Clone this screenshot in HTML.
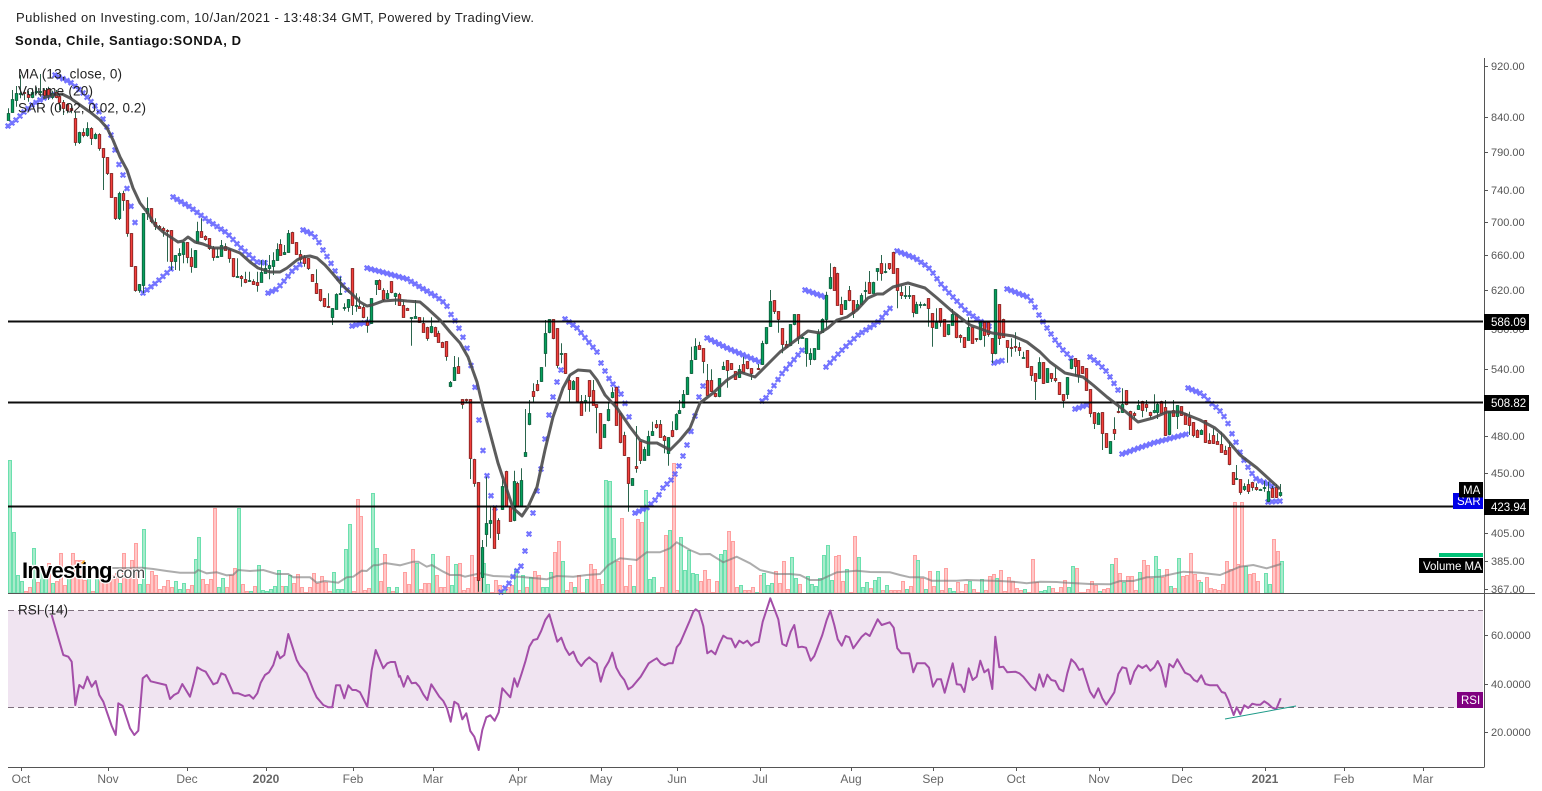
<!DOCTYPE html>
<html lang="en"><head><meta charset="utf-8"><title>Sonda, Chile, Santiago:SONDA, D</title>
<style>
html,body{margin:0;padding:0;background:#fff;width:1542px;height:791px;overflow:hidden}
svg{position:absolute;left:0;top:0;display:block}
text{font-family:"Liberation Sans",sans-serif}
.ax{font-size:11px;fill:#555}
.mo{font-size:12px;fill:#666;text-anchor:middle}
.lg{font-size:13.5px;fill:#222}
.bl{font-size:11.5px;fill:#fff}
</style></head><body>
<svg width="1542" height="791" viewBox="0 0 1542 791" xmlns="http://www.w3.org/2000/svg">
<rect x="8" y="610.5" width="1475" height="97" fill="#f0e4f1"/>
<path d="M8 610.5H1483M8 707.5H1483" stroke="#7d6f7d" stroke-width="1" stroke-dasharray="6 4" fill="none"/>
<g id="vol"></g>
<polyline id="vma" fill="none" stroke="#777" stroke-opacity=".6" stroke-width="2"/>
<g id="sar"></g>
<g id="can"></g>
<path d="M8 321.5H1483M8 402.5H1483M8 506.5H1483" stroke="#000" stroke-width="2" stroke-opacity=".95" fill="none"/>
<polyline id="ma" fill="none" stroke="#4a4a4a" stroke-opacity=".9" stroke-width="3" stroke-linejoin="round"/>
<polyline id="rsi" fill="none" stroke="#a34ea8" stroke-width="2" stroke-linejoin="round"/>
<line x1="1225" y1="719" x2="1296" y2="706" stroke="#1d9a88" stroke-width="1"/>
<path d="M8 593.5H1535M8 767.5H1484.5M1484.5 58V767M1484 66.5h4M1484 117.5h4M1484 152.5h4M1484 190.5h4M1484 222.5h4M1484 255.5h4M1484 290.5h4M1484 369.5h4M1484 436.5h4M1484 473.5h4M1484 533.5h4M1484 561.5h4M1484 589.5h4M1484 635.5h4M1484 684.5h4M1484 732.5h4M21.5 767v4M108.5 767v4M187.5 767v4M266.5 767v4M353.5 767v4M433.5 767v4M518.5 767v4M601.5 767v4M677.5 767v4M760.5 767v4M851.5 767v4M933.5 767v4M1016.5 767v4M1099.5 767v4M1182.5 767v4M1265.5 767v4M1344.5 767v4M1423.5 767v4" stroke="#555" stroke-width="1" fill="none"/>

<text x="16" y="22" font-size="13" fill="#222" textLength="518">Published on Investing.com, 10/Jan/2021 - 13:48:34 GMT, Powered by TradingView.</text>
<text x="15" y="45" font-size="13" font-weight="700" fill="#111" textLength="226">Sonda, Chile, Santiago:SONDA, D</text>
<text class="lg" x="18" y="78.5" textLength="104">MA (13, close, 0)</text>
<text class="lg" x="18" y="95.5" textLength="75">Volume (20)</text>
<text class="lg" x="18" y="112.5" textLength="128">SAR (0.02, 0.02, 0.2)</text>
<text class="lg" x="18" y="614.5" textLength="50">RSI (14)</text>

<text x="22" y="578" font-size="22" font-weight="700" fill="#000" letter-spacing="-.75" stroke="#fff" stroke-width="2.5" paint-order="stroke">Investing</text>
<text x="112" y="578" font-size="15.5" fill="#444" letter-spacing="-.2" stroke="#fff" stroke-width="2" paint-order="stroke">.com</text>
<path d="M81 563l3-3 1 1-2 3z" fill="#f5a623"/>

<text class="ax" x="1491" y="70">920.00</text>
<text class="ax" x="1491" y="121">840.00</text>
<text class="ax" x="1491" y="156">790.00</text>
<text class="ax" x="1491" y="194">740.00</text>
<text class="ax" x="1491" y="226">700.00</text>
<text class="ax" x="1491" y="259">660.00</text>
<text class="ax" x="1491" y="294">620.00</text>
<text class="ax" x="1491" y="333">580.00</text>
<text class="ax" x="1491" y="373">540.00</text>
<text class="ax" x="1491" y="440">480.00</text>
<text class="ax" x="1491" y="477">450.00</text>
<text class="ax" x="1491" y="537">405.00</text>
<text class="ax" x="1491" y="565">385.00</text>
<text class="ax" x="1491" y="593">367.00</text>
<text class="ax" x="1491" y="639">60.0000</text>
<text class="ax" x="1491" y="688">40.0000</text>
<text class="ax" x="1491" y="736">20.0000</text>

<rect x="1484" y="314" width="45" height="16" fill="#000"/><text class="bl" x="1491" y="326">586.09</text>
<rect x="1484" y="395" width="45" height="16" fill="#000"/><text class="bl" x="1491" y="407">508.82</text>
<rect x="1484" y="499" width="45" height="16" fill="#000"/><text class="bl" x="1491" y="511">423.94</text>
<rect x="1453" y="493" width="30" height="16" fill="#0000e6"/><text class="bl" x="1457" y="505">SAR</text>
<rect x="1459" y="482" width="24" height="15.500" fill="#000"/><text class="bl" x="1463" y="494">MA</text>
<rect x="1439" y="553" width="44" height="4" fill="#00c176"/>
<rect x="1419" y="558" width="64" height="15" fill="#000"/><text class="bl" x="1423" y="570">Volume MA</text>
<rect x="1457" y="692" width="26" height="16" fill="#800080"/><text class="bl" x="1461" y="704">RSI</text>

<text class="mo" x="21" y="783">Oct</text>
<text class="mo" x="108" y="783">Nov</text>
<text class="mo" x="187" y="783">Dec</text>
<text class="mo" x="266" y="783" font-weight="700">2020</text>
<text class="mo" x="353" y="783">Feb</text>
<text class="mo" x="433" y="783">Mar</text>
<text class="mo" x="518" y="783">Apr</text>
<text class="mo" x="601" y="783">May</text>
<text class="mo" x="677" y="783">Jun</text>
<text class="mo" x="760" y="783">Jul</text>
<text class="mo" x="851" y="783">Aug</text>
<text class="mo" x="933" y="783">Sep</text>
<text class="mo" x="1016" y="783">Oct</text>
<text class="mo" x="1099" y="783">Nov</text>
<text class="mo" x="1182" y="783">Dec</text>
<text class="mo" x="1265" y="783" font-weight="700">2021</text>
<text class="mo" x="1344" y="783">Feb</text>
<text class="mo" x="1423" y="783">Mar</text>
</svg>
<script>
var E=function(i){return document.getElementById(i)};
function pairs(ox,oy,s){return s.trim().split(/\s+/).map(function(p){var a=p.split(',');return [ox+a[0]/3,oy+a[1]/3]})}
/* candles: colour+zx,top,bot,wickTop,wickBot (3x crop coordinates) */
var CS=[[0,0,"g24,338,360,325,360 g37,298,338,270,338 g49,278,298,258,320 g61,278,282,225,295 r73,277,280,270,300 r85,282,292,272,305 g97,275,290,265,295 g109,272,276,262,282 g121,272,276,222,290 r133,270,285,265,295 r145,267,285,260,300 g157,278,290,272,298 r167,276,290,270,295 r178,288,307,282,330 r190,307,325,300,345 r202,313,330,310,340 r214,325,332,318,340 r226,355,428,335,437 g238,397,428,395,432 r250,397,407,385,412 g262,385,407,367,410 r274,385,415,382,435 g286,403,415,398,418 r298,403,446,400,452 r310,445,473,445,570 r322,472,521,472,525 r334,520,592,520,592 r346,592,656,592,660 g356,580,656,575,660 r368,580,602,572,632 r380,600,700,600,710 r392,700,800,700,800 r404,798,870,798,875 g416,852,870,852,878 g428,640,855,640,880 g440,625,640,592,660 r452,625,665,625,670 r464,665,678,655,690 r476,678,685,675,690 r488,684,690,680,710 r500,690,692,688,785 r512,690,782,690,810 g524,765,782,765,810 g536,760,765,745,812 g548,725,760,725,790 r560,726,772,726,790 r572,772,800,745,818 g584,750,800,750,800 g592,693,728,665,730 r604,693,710,655,712 r616,708,716,706,722 r628,715,745,715,750 r640,745,772,738,782 g652,768,772,745,772 g664,735,768,720,770 r676,737,748,730,750 r688,748,775,745,788 r700,775,830,775,832 g712,828,830,775,832 r724,828,835,825,860 r736,836,845,815,850 g748,840,843,815,845 r760,842,852,838,855 r772,845,855,815,875"],
[260,220,"g3,155,185,120,185 g16,143,158,120,160 g28,135,143,105,178 g40,120,137,97,165 g52,88,122,70,122 r61,72,104,58,104 g73,97,104,75,105 g85,40,98,30,98 r97,35,67,35,67 r109,67,104,67,104 r121,103,117,90,130 r133,112,130,105,140 r145,115,144,115,150 r157,162,182,162,184 r169,190,220,148,222 r181,208,242,208,245 r193,235,260,235,262 r205,258,262,220,263 g217,265,293,265,315 g229,222,266,220,268 g241,220,223,170,225 g253,262,265,250,272 g265,237,262,237,275 r277,145,257,145,285 g289,255,258,220,275 r298,257,262,230,265 r310,262,293,255,295 r322,302,314,290,338 g334,235,310,235,312 g347,181,193,181,225 r358,181,209,178,210 r370,209,237,205,245 g382,220,235,210,238 r394,184,218,184,220 g406,220,230,218,255 r418,222,256,218,257"],
[400,300,"r10,15,52,0,52 r22,23,28,23,30 g34,52,54,52,137 g46,48,53,0,55 r58,52,67,52,68 r70,68,95,52,97 r82,80,113,80,122 g94,78,95,52,100 r106,80,107,80,108 r115,99,125,92,127 r127,125,140,125,142 r139,124,170,124,182 g151,247,258,243,262 g163,202,241,168,243 r175,198,218,172,220 r187,298,314,298,326 r199,296,298,296,310 r211,298,475,298,537 r223,476,547,476,560 r235,547,842,547,875 g247,740,830,720,875 g259,670,702,530,740 g271,660,670,620,715 r283,620,742,620,744 r295,660,700,655,720 g307,558,628,540,630 r319,512,616,512,620 r331,617,662,617,664 g343,544,662,512,664 r352,550,618,545,620 g364,541,618,505,620 g376,457,470,327,470 g388,340,374,300,376 r400,272,288,250,305 r412,253,272,240,274 g424,202,245,202,246 g436,100,160,60,200 g448,58,97,58,100 r460,58,115,58,118 r472,85,196,85,205 g484,160,164,130,190 r496,160,220,160,222 r508,240,268,225,305 g520,243,268,240,270 r532,232,305,232,307 r544,302,344,285,346 g556,300,305,285,335 r568,241,290,241,335 r580,270,314,240,316 r589,313,322,313,400 r601,340,445,340,447 g613,372,410,372,412 g625,328,362,305,364 g637,275,290,262,295 r649,260,374,260,376 r661,340,428,340,430 r673,406,466,395,468 r685,472,550,472,635 g697,534,554,534,556 r709,499,505,378,518 r721,423,479,423,492 g733,447,479,440,481 g745,408,464,392,466 g757,394,406,365,408 r769,373,383,360,386 r781,372,410,360,412 r793,409,422,405,460 g805,412,460,412,497 r817,391,410,364,412 g829,343,389,340,391 g838,331,340,300,342 g850,283,323,270,325 g862,232,284,230,285 g874,181,220,140,222 g886,138,178,115,180 r898,135,146,125,148 r910,145,185,145,220"],
[660,250,"r142,390,436,342,438 r154,390,424,358,426 r166,430,440,428,442 g178,385,440,385,442 g190,348,358,335,360 r202,331,360,331,413 r214,340,358,340,360 r226,364,388,364,390 g238,358,382,345,384 r250,343,367,320,370 r262,334,356,334,358 r274,355,371,355,390 r295,355,358,342,360 g307,280,343,272,345 g319,232,281,232,283 g331,154,229,120,231 r343,151,184,151,192 r355,184,209,184,248 r367,235,284,235,310 r379,282,290,272,292 g391,223,287,223,289 g403,193,224,193,226 r415,193,265,193,282 g427,261,263,258,265 g439,265,311,265,350 g451,310,329,295,345 g463,295,329,295,331 g475,248,296,238,298 g487,208,247,205,249 g499,136,208,125,235 g511,82,116,40,118 r523,50,119,50,120 r532,68,164,68,165 r544,163,193,140,195 g556,151,179,150,180 r568,121,152,108,154 r580,151,191,151,204 g592,163,178,150,180"],
[800,230,"g184,196,222,190,224 g196,180,183,155,210 r208,157,190,123,192 g220,155,188,155,190 g232,115,125,115,152 r244,100,130,75,152 g256,124,128,100,130 r268,100,116,100,120 r280,65,127,65,128 r292,115,181,115,235 r304,187,197,168,207 g316,195,197,168,207 g328,195,197,168,207 r340,196,248,196,262 g349,222,248,215,250 g361,222,224,215,235 g373,222,224,220,225 r385,205,236,205,290 r397,250,293,250,350 g409,275,293,235,295 r421,235,277,235,290 r433,268,318,268,320 g445,283,314,283,316 g457,252,284,237,286 r469,253,322,253,325 r481,316,323,313,338 r493,322,352,322,354 g505,291,329,262,331 r517,291,338,291,340 r529,325,328,325,335 g541,277,329,277,331 r553,277,317,277,350 r565,275,310,275,320 r577,325,371,325,400 g586,178,371,178,373 r598,223,326,223,345 r610,266,320,266,322 r622,331,353,331,398 r634,352,355,325,380 r646,348,351,307,365 r658,352,362,337,378 g670,381,383,365,383 r682,361,411,361,413 r694,409,437,409,452 r706,430,455,430,510 g718,397,445,382,447 r730,397,461,397,462 g742,415,457,415,459 r754,430,446,430,456 r766,445,450,412,457 r778,457,494,457,495 r790,493,510,493,533 g802,441,491,441,507 g814,388,416,386,418 r826,385,410,385,437 r835,391,435,391,458 r847,409,430,409,432 r859,415,481,415,482 r871,478,551,478,562 r883,547,581,547,597 g895,549,581,547,583 r907,547,611,547,660 r919,610,652,610,654 g931,634,670,634,672 r943,598,611,562,630 r955,544,548,530,550 g967,522,547,475,549 r979,481,524,481,526 r991,542,596,542,598 r1003,550,556,545,565 g1015,526,538,510,540 r1027,512,538,512,562 r1039,522,530,510,545 r1051,547,555,545,565 g1063,541,547,493,550 g1072,522,546,515,567 r1084,512,547,512,549 r1096,532,617,510,618 g1108,544,614,544,616 r1120,541,558,510,560 g1132,526,558,526,597 r1144,529,556,529,558 r1156,548,581,548,583 r1168,562,586,545,615 r1180,576,614,576,622 r1192,600,620,598,623"],
[1200,380,"g3,150,163,148,165 r15,120,187,120,189 r28,180,190,160,192 r40,165,190,145,192 r52,182,190,160,192 r64,192,215,155,217 r76,210,221,197,225 r88,202,254,185,256 r100,277,313,277,315 g109,295,297,255,300 r121,298,338,298,344 g133,319,329,310,333 r145,313,334,298,342 r157,307,323,305,332 r169,322,328,310,332 g181,326,328,326,328 g193,322,325,303,335 g205,334,365,305,367 r217,324,350,318,352 r229,322,352,312,354 g241,337,347,312,350"]];
var wk='',rb='',gb='';
CS.forEach(function(c){c[2].split(' ').forEach(function(e){var g=e[0]=='g',a=e.slice(1).split(',').map(Number),X=Math.round(c[0]+a[0]/3),t=c[1]+a[1]/3,b=c[1]+a[2]/3,wt=c[1]+a[3]/3,wb=c[1]+a[4]/3;
wk+='M'+(X+.5)+' '+wt.toFixed(1)+'V'+wb.toFixed(1);
var T=Math.round(t)+.5,H=Math.max(1,Math.round(b-t));var d='M'+(X-.75)+' '+T+'h2.5v'+H+'h-2.5z';if(g)gb+=d;else rb+=d;});});
E('can').innerHTML='<path d="'+wk+'" stroke="#14553a" stroke-width=".9" fill="none"/><path d="'+rb+'" fill="#f2403c" stroke="#7d1c1c" stroke-width=".8"/><path d="'+gb+'" fill="#06a05c" stroke="#0d5a3a" stroke-width=".8"/>';
/* volume */
var VS=[[0,460,1353,"g30,0 g42,217 g54,345 g66,363 r78,393 r90,381 g102,265 r114,366 g126,330 g138,330 r147,310 g159,370 r171,363 r183,280 r195,375 g207,330 r219,280 r231,300 r243,300 r255,360 g267,350 r279,393 g291,340 r303,350 r315,360 r327,366 r339,345 r351,340 g360,370 r372,280 r384,350 r396,300 r408,250 g420,372 g432,208 r444,372 r456,333 r468,345 r480,388 r492,378 r504,360 r516,381 g528,363 g540,388 g552,370 r564,388 r576,376 g588,297 g597,232 r609,357 r621,372 r633,357 r645,145 g657,381 g669,354 r681,381 r693,345 r705,324 g717,145 r729,372 r741,393 g753,394 r765,378 g777,316 g789,390 g801,393 g813,387 g825,378 g837,330 r846,378 g858,378 g870,345 r882,369 r894,342 r906,381 r918,396 r930,381 r942,339 r954,369 r966,348 r978,366 r990,393 g1002,336 g1014,387 g1026,387 g1038,267 g1050,192 r1062,393 r1074,117 r1083,168 r1095,390 r1107,384 g1119,99 g1131,264 r1143,363 r1155,282 g1167,381 r1179,393 g1191,381"],
[400,300,0,"r15,817 r27,852 r39,748 g51,790 r63,868 r75,850 r87,850 g99,763 r111,825 r123,860 r135,862 r144,768 g156,855 g168,793 r180,790 r192,870 r204,865 r216,765 r228,832 r240,835 g252,790 g264,852 r276,875 r288,840 r300,855 g312,870 r324,860 r336,855 g348,808 r360,870 g368,825 r380,860 g392,832 r404,813 r416,825 g428,862 g440,862 g452,817 r464,757 r476,724 g488,784 r500,870 r512,846 g524,862 r536,825 r548,875 g560,838 r572,793 r584,808 r596,838 r608,851 g617,541 g629,544 g641,714 r653,782 r665,655 r677,858 r689,796 g701,858 r713,657 r725,666 g737,571 g749,838 g761,832 r773,875 r785,862 r797,706 g809,690 r821,490 r830,870 g842,712 g854,810 g866,750 g878,820 g890,822 r902,844 r914,810 r926,838 r938,875 r950,844 g962,763 g974,750 r986,694 r998,724 r1010,862 g1022,856 r1034,870 r1046,870 r1058,862 g1070,875 r1082,825 g1091,820 g1103,855 g1115,850 r1127,814 r1139,850 r1151,784 r1163,868 g1175,771 g1187,834"],
[800,520,0,"r0,193 g24,167 g36,193 g48,198 g60,175 g72,106 g84,76 g96,181 r108,109 r117,106 r129,183 g141,148 r153,216 r165,49 g177,112 g189,202 g201,187 r213,205 g225,181 g237,172 r249,211 g261,196 r273,211 r285,211 r297,211 r309,184 g321,208 r333,199 r345,106 g354,121 r366,175 g378,208 r390,154 r402,199 g414,154 r426,211 r438,145 g450,205 g462,214 r474,186 r486,214 r498,193 g510,184 r522,208 r534,217 g546,178 r558,211 r570,169 r582,163 g591,175 r603,151 r615,214 r627,172 r639,184 r651,205 r663,211 g675,208 r687,217 r699,118 r711,187 g723,214 g735,211 g747,199 r759,205 r771,217 r783,202 r795,181 g807,202 g819,139 r831,145 r843,217 r855,217 r864,208 r876,184 r888,196 g900,214 r912,208 r924,205 g936,133 r948,115 r960,160 g972,187 r984,169 r996,169 r1008,211 g1020,157 r1032,121 r1044,136 r1056,175 g1068,109 g1077,148 r1089,172 r1101,148 g1113,199 r1125,205 g1137,115 r1149,169 r1161,166 r1173,100 r1185,163 r1197,181"],
[1200,380,0,"g3,605 r21,592 r33,625 r45,628 r57,630 r69,613 r81,544 r93,568 r105,367 r115,553 r127,367 g138,558 r150,582 r162,580 r174,603 g198,580 g210,613 r222,478 r234,514 g246,544"]];
var vr='',vg='';
VS.forEach(function(c){c[3].split(' ').forEach(function(e){var g=e[0]=='g',a=e.slice(1).split(','),X=Math.round(c[0]+a[0]/3),t=Math.round(c[1]+a[1]/3);var d='M'+(X-1.5)+' '+(t+.5)+'h3V593h-3z';if(g)vg+=d;else vr+=d;});});
E('vol').innerHTML='<path d="'+vr+'" fill="#ffc8c8" stroke="#ff9f9f" stroke-width="1"/><path d="'+vg+'" fill="#a8ebcb" stroke="#6be0ae" stroke-width="1"/>';
/* volume MA */
var vm=[[100,568],[125,568]].concat(pairs(0,460,"425,323 460,327 500,333 540,338 585,338 595,330 620,340 650,337 680,346 700,344 715,330 750,333 790,330 830,342 865,342 880,352 930,352 950,368 975,363 1015,368 1040,352 1060,350 1085,332 1100,333 1120,316 1135,315 1155,309 1200,316"),pairs(400,300,"40,785 55,785 80,800 95,795 130,815 150,825 180,825 195,830 240,820 280,828 330,830 360,830 440,838 470,828 520,830 560,825 600,822 625,795 660,775 710,780 740,757 780,757 810,745 830,727 870,750 900,763 930,762 970,787 1010,770 1050,790 1080,810 1130,822 1170,822 1200,825"),pairs(800,520,"30,180 60,180 110,157 170,152 210,156 270,157 300,165 330,172 370,172 395,182 470,182 500,180 600,183 640,185 680,190 720,185 770,186 800,188 870,192 930,193 960,183 1000,183 1040,172 1080,170 1150,155 1200,158"),pairs(1200,380,"60,585 120,560 160,555 200,565 243,552"));
function fmt(p){return p.map(function(q){return q[0].toFixed(1)+','+q[1].toFixed(1)}).join(' ')}
E('vma').setAttribute('points',fmt(vm));
/* MA 13 */
E('ma').setAttribute('points',"43,98 53,95 62,94 70,98 80,105 90,112 100,120 107,128 113,140 120,157 127,170 133,188 140,203 147,212 155,225 163,232 172,238 178,242 183,241 188,237 195,242 203,244 213,248 227,248 240,253 250,262 258,268 270,272 280,272 287,268 297,260 303,257 310,256 317,258 325,265 333,274 343,286 353,295 360,302 367,306 372,305 383,301 397,300 407,301 420,302 427,308 440,320 450,332 460,343 468,357 477,382 483,407 490,433 498,463 507,490 513,508 522,516 528,507 537,487 545,450 553,417 563,388 570,375 578,370 590,371 597,380 605,395 617,408 630,427 640,440 648,443 657,443 670,450 680,440 690,428 700,403 713,393 727,380 740,372 755,377 767,365 780,352 800,337 808,331 820,333 828,328 837,320 847,317 857,310 868,298 877,294 883,294 893,287 908,283 925,288 937,298 953,312 970,325 992,333 1013,336 1027,342 1040,352 1050,362 1065,373 1083,377 1093,385 1107,397 1120,407 1138,422 1153,418 1167,412 1180,412 1200,420 1215,428 1223,435 1240,455 1257,468 1280,489");
/* RSI */
var rs=pairs(0,460,"155,465 190,585 205,590 215,605 226,735 238,675 250,685 262,650 275,680 287,663 298,705 310,725 335,798 347,825 355,730 368,738 390,805 403,825 415,812 428,655 440,645 452,664 498,675 510,717 522,705 535,698 547,672 570,710 582,665 592,622 605,630 617,635 640,673 652,668 664,640 676,645 700,700 715,700 735,708 748,705 760,716 772,700 782,668 795,645 807,637 820,615 832,575 840,595 853,585 865,522 890,600 900,617 920,640 940,690 950,712 970,735 985,742 997,742 1008,676 1020,676 1033,715 1045,676 1057,690 1068,690 1080,697 1102,740 1115,630 1127,570 1150,625 1162,610 1172,606 1185,606 1197,650").concat(
pairs(400,590,"0,258 11,290 23,258 35,280 47,278 58,290 70,313 82,330 94,283 118,320 130,333 141,355 152,395 163,335 175,343 187,388 199,370 211,423 223,440 236,480 247,420 259,382 271,376 284,392 296,367 307,295 331,322 343,265 352,290 365,250 376,215 388,170 400,150 412,147 424,122 436,90 448,73 472,155 484,143 496,175 508,195 520,185 532,213 544,228 556,212 568,202 580,213 590,220 602,275 614,235 626,215 637,188 649,233 661,255 673,270 685,298 697,290 722,260 746,220 758,212 770,205 782,220 794,226 806,220 818,220 830,172 840,160 868,95 880,65 887,58 897,65 910,108 922,190 934,182 946,193 958,162 970,137 982,145 994,146 1006,172 1018,152 1030,160 1042,152 1054,167 1066,158 1076,156 1088,95 1111,25 1135,88 1147,162 1159,168 1172,125 1183,105 1195,172"),
pairs(780,590,"66,170 78,173 92,212 103,198 127,135 140,90 151,62 163,105 173,148 185,167 197,138 208,142 220,175 245,140 257,130 269,138 293,88 305,105 329,97 341,113 352,175 364,190 388,190 400,247 411,220 435,220 447,233 459,290 471,268 483,268 494,308 518,220 530,283 542,284 553,306 566,235 578,270 590,260 601,212 613,247 625,238 637,297 646,140 658,232 670,230 682,247 706,245 718,250 730,260 754,290 766,301 778,253 790,290 802,254 814,270 826,273 838,297 850,304 862,250 874,208 886,220 898,240 908,236 930,305 942,323 955,295 967,325 979,344 1003,307 1015,252 1027,232 1039,235 1051,282 1063,245 1075,226 1087,234 1099,226 1111,242 1123,232 1133,213 1143,232 1157,290 1168,222 1180,232 1192,208 1200,222"),
pairs(1140,600,"135,218 150,225 162,240 172,245 184,226 196,252 210,256 232,256 245,276 255,279 265,300 281,345 290,322 301,343 313,316 325,324 337,311 349,314 361,314 373,304 385,312 397,323 409,327 422,295"));
E('rsi').setAttribute('points',fmt(rs));
/* SAR */
var SA=["8,126 16,120 24,112 32,105 40,100 48,96 54,94","55,75 70,82 83,93 97,108 103,119 107,127 112,137 115,150 118,162 122,172 126,184 130,202 134,219 138,233","143,293 157,282 172,268","173,197 190,207 207,220 227,233 240,247 257,262 267,263","268,293 277,289 285,280 293,270 302,263","303,230 312,234 317,239 321,246 324,252 328,258 333,267 337,275 341,282 345,288 349,292","352,326 363,323 370,322","367,268 393,275 407,279 420,287 437,297 446,304 450,313 454,319 458,326 462,335 466,344 470,361 474,379 478,412 482,444 486,470 490,493 494,504 498,520","501,592 506,587 510,582 515,573 522,565 525,551 529,534 533,513 537,491 541,469 545,439 549,415 553,397 557,382 561,370","565,319 577,328 587,340 597,352 600,361 604,369 608,377 612,383 620,392 624,400 632,427","635,513 648,507 657,498 663,488 673,478 679,466 683,456 687,445 692,428 696,412 699,397 703,386","707,338 727,348 760,362","762,401 767,397 775,384 783,372 792,362 803,349","805,290 825,297","826,367 840,352 858,335 877,323 893,305","897,251 915,258 928,267 933,273 940,283 953,297 967,312 983,323 992,328","994,363 1004,360","1007,289 1028,297 1032,302 1036,309 1040,317 1047,328 1055,340 1063,350 1071,358","1075,409 1087,405","1090,357 1098,363 1107,372 1115,385 1118,390","1122,454 1153,443 1187,434","1188,388 1202,394 1210,402 1217,408 1222,413 1226,420 1230,427 1233,437 1237,444 1241,455 1245,462 1249,469 1253,475 1257,480 1267,483 1272,486","1268,502 1282,501"];
var sd='';
SA.forEach(function(s){var p=s.split(' ').map(function(q){return q.split(',').map(Number)});
for(var x=p[0][0];x<=p[p.length-1][0]+.01;x+=4){var i=0;while(i<p.length-2&&p[i+1][0]<x)i++;var a=p[i],b=p[i+1],y=a[1]+(b[1]-a[1])*(x-a[0])/(b[0]-a[0]);
var Y=y;sd+='M'+(x-2.3)+' '+(Y-2.3).toFixed(1)+'l4.6 4.6M'+(x+2.3)+' '+(Y-2.3).toFixed(1)+'l-4.6 4.6';}});
E('sar').innerHTML='<path d="'+sd+'" stroke="#5a5aff" stroke-opacity=".85" stroke-width="2.3" fill="none"/>';
</script>
</body></html>
